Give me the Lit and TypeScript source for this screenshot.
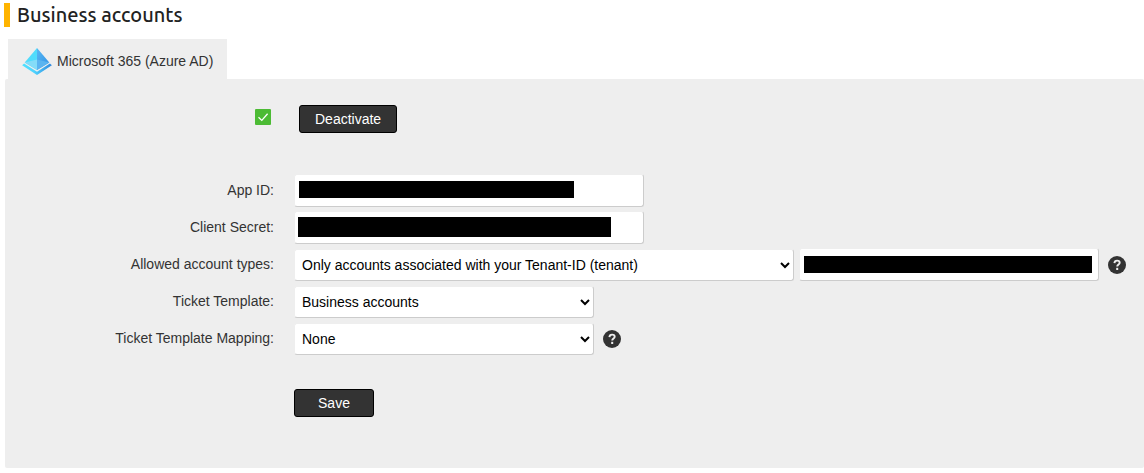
import { LitElement, html, svg, css } from "lit";
import { customElement, property, state } from "lit/decorators.js";

@customElement("help-button")
class HelpButton extends LitElement {
  @property() topic = "";

  static styles = css`
    :host {
      display: flex;
    }
    .help {
      width: 18px;
      height: 18px;
      padding: 0;
      border: 0;
      background: none;
      cursor: pointer;
    }
    svg {
      display: block;
      width: 18px;
      height: 18px;
    }
  `;

  render() {
    return html`<button class="help" type="button" aria-label="Help: ${this.topic}">
      <svg viewBox="0 0 18 18" aria-hidden="true">
        <circle cx="9" cy="9" r="9" fill="#333" />
        <path d="M6.4 7.1C6.5 5.4 7.6 4.6 9.1 4.6C10.7 4.6 11.7 5.4 11.7 6.8C11.7 8.6 9.2 8.5 9.2 10.6" fill="none" stroke="#eee" stroke-width="1.9" />
        <rect x="8.2" y="11.8" width="2" height="2.2" fill="#eee" />
      </svg>
    </button>`;
  }
}

const azureLogo = svg`
  <defs>
    <linearGradient id="edge" x1="0" y1="0" x2="1" y2="0">
      <stop offset="0" stop-color="#4fe2ff" />
      <stop offset="0.4" stop-color="#4fd4ff" />
      <stop offset="1" stop-color="#2f86dc" />
    </linearGradient>
    <linearGradient id="right" x1="0" y1="0" x2="1" y2="1">
      <stop offset="0" stop-color="#58b8f4" />
      <stop offset="1" stop-color="#2f8fe4" />
    </linearGradient>
  </defs>
  <path d="M0 17.4L2 15.6L15 23.8L28 15.6L30 17.4L15 27.2Z" fill="url(#edge)" />
  <path d="M15 0L2.6 14.6L15 22.2L27.4 14.6Z" fill="#eee" stroke="#eee" stroke-width="1.2" />
  <path d="M15 0L2.6 14.6L15 22.2Z" fill="#50dcfc" />
  <path d="M15 0L27.4 14.6L15 22.2Z" fill="url(#right)" />
  <path d="M15 11.6L2.6 14.6L15 22.2Z" fill="#84dcf8" />
  <path d="M15 11.6L27.4 14.6L15 22.2Z" fill="#5ab4f0" />
`;

@customElement("app-root")
class AppRoot extends LitElement {
  @state() private active = true;

  static styles = css`
    :host {
      display: block;
      padding: 3px 0 5px 4px;
      font: 14px/20px "Liberation Sans", Arial, sans-serif;
      color: #333;
      background: #fff;
    }
    * {
      box-sizing: border-box;
    }
    .title {
      margin: 0 0 12px;
      padding-left: 7px;
      border-left: 6px solid #ffb400;
      font: 500 20px/24px Ubuntu, "Noto Sans", "Open Sans", sans-serif;
      color: #222;
    }
    .tabs {
      display: flex;
      padding-left: 4px;
    }
    .tab {
      display: flex;
      align-items: center;
      gap: 5px;
      height: 40px;
      padding: 4px 14px 0;
      background: #eee;
      color: inherit;
      text-decoration: none;
    }
    .logo {
      display: block;
      width: 30px;
      height: 27px;
    }
    .panel {
      display: flex;
      flex-direction: column;
      gap: 4px;
      margin-left: 1px;
      padding: 26px 16px 51px 0;
      border-radius: 2px;
      background: #eee;
    }
    .row {
      display: grid;
      grid-template-columns: 269px minmax(0, 1fr);
      column-gap: 20px;
      align-items: center;
    }
    .status-row {
      margin-bottom: 37px;
      column-gap: 25px;
    }
    .save-row {
      margin-top: 30px;
    }
    .label {
      padding-bottom: 2px;
      text-align: right;
    }
    .status {
      justify-self: end;
      display: block;
      width: 16px;
      height: 16px;
      margin: 0 3px 4px 0;
    }
    .fields {
      display: flex;
      align-items: flex-end;
      gap: 5px;
      min-height: 33px;
    }
    .help-slot {
      margin: 0 0 7px 4px;
    }
    .control {
      border: 1px solid #ccc;
      border-top-color: #eee;
      border-left-color: #eee;
      border-radius: 3px;
      background-color: #fff;
      font: inherit;
      color: #000;
    }
    .text {
      height: 33px;
      padding: 0 8px;
      background-image: linear-gradient(#000, #000);
      background-repeat: no-repeat;
    }
    .select {
      height: 32px;
      padding: 0 3px;
    }
    .wide {
      width: 500px;
    }
    .medium {
      width: 350px;
    }
    .narrow {
      width: 300px;
    }
    .app-id {
      background-size: 275px 17px;
      background-position: 4px 6px;
    }
    .secret {
      background-size: 313px 20px;
      background-position: 3px 5px;
    }
    .tenant {
      background-size: 288px 17px;
      background-position: 4px 7px;
    }
    .button {
      justify-self: start;
      height: 28px;
      padding: 0 15px;
      border: 1px solid #000;
      border-radius: 3px;
      background: #333;
      font: inherit;
      color: #fff;
      cursor: pointer;
    }
    .save {
      grid-column: 2;
      min-width: 80px;
    }
  `;

  render() {
    return html`
      <h1 class="title">Business accounts</h1>
      <nav class="tabs">
        <a class="tab" href="#azure" aria-current="page">
          <svg class="logo" viewBox="0 0 30 27.2" aria-hidden="true">${azureLogo}</svg>
          <span>Microsoft 365 (Azure AD)</span>
        </a>
      </nav>
      <form class="panel" @submit=${(e: Event) => e.preventDefault()}>
        <div class="row status-row">
          <svg class="status" viewBox="0 0 16 16" aria-hidden="true">
            <rect width="16" height="16" rx="1" fill=${this.active ? "#4cbb34" : "#aaa"} />
            <path d="M3.5 8.2L6.8 11.4L12.6 4.8" fill="none" stroke="#fff" stroke-width="1.3" />
          </svg>
          <button class="button" type="button" @click=${() => (this.active = !this.active)}>
            ${this.active ? "Deactivate" : "Activate"}
          </button>
        </div>
        <div class="row">
          <label class="label" for="app-id">App ID:</label>
          <div class="fields"><input id="app-id" class="control text medium app-id" type="text" /></div>
        </div>
        <div class="row">
          <label class="label" for="secret">Client Secret:</label>
          <div class="fields"><input id="secret" class="control text medium secret" type="text" /></div>
        </div>
        <div class="row">
          <label class="label" for="types">Allowed account types:</label>
          <div class="fields">
            <select id="types" class="control select wide">
              <option>Only accounts associated with your Tenant-ID (tenant)</option>
            </select>
            <input class="control text narrow tenant" type="text" aria-label="Tenant-ID" />
            <help-button class="help-slot" topic="Allowed account types"></help-button>
          </div>
        </div>
        <div class="row">
          <label class="label" for="template">Ticket Template:</label>
          <div class="fields">
            <select id="template" class="control select narrow">
              <option>Business accounts</option>
            </select>
          </div>
        </div>
        <div class="row">
          <label class="label" for="mapping">Ticket Template Mapping:</label>
          <div class="fields">
            <select id="mapping" class="control select narrow">
              <option>None</option>
            </select>
            <help-button class="help-slot" topic="Ticket Template Mapping"></help-button>
          </div>
        </div>
        <div class="row save-row">
          <button class="button save" type="submit">Save</button>
        </div>
      </form>
    `;
  }
}
